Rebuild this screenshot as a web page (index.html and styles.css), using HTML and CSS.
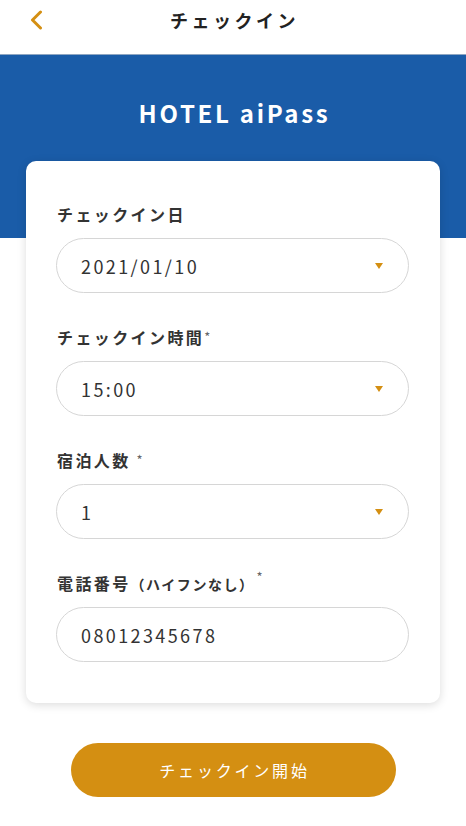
FILE: index.html
```html
<!DOCTYPE html>
<html lang="ja">
<head>
<meta charset="utf-8">
<title>チェックイン</title>
<link rel="stylesheet" href="styles.css">
</head>
<body>
<header class="topbar">
  <a class="back" aria-label="戻る">
    <svg width="14" height="20" viewBox="0 0 14 20"><path d="M11.5 2 L3.5 10 L11.5 18" fill="none" stroke="#d48f12" stroke-width="3" stroke-linecap="round" stroke-linejoin="round"/></svg>
  </a>
  <h1 class="title">チェックイン</h1>
</header>
<section class="hero">
  <div class="brand">HOTEL aiPass</div>
</section>
<main class="card">
  <div class="field">
    <label class="label">チェックイン日</label>
    <div class="control select"><span class="value">2021/01/10</span><span class="caret"></span></div>
  </div>
  <div class="field">
    <label class="label">チェックイン時間<span class="req">*</span></label>
    <div class="control select"><span class="value">15:00</span><span class="caret"></span></div>
  </div>
  <div class="field">
    <label class="label">宿泊人数<span class="req sp">*</span></label>
    <div class="control select"><span class="value">1</span><span class="caret"></span></div>
  </div>
  <div class="field">
    <label class="label">電話番号<span class="sub">（ハイフンなし）</span><span class="req hi">*</span></label>
    <div class="control"><span class="value">08012345678</span></div>
  </div>
</main>
<div class="actions">
  <button class="primary">チェックイン開始</button>
</div>
</body>
</html>
```
FILE: styles.css
```css
* { box-sizing: border-box; }
html, body { margin: 0; padding: 0; }
body {
  width: 466px;
  background: #fff;
  font-family: "Noto Sans CJK JP", "Noto Sans", sans-serif;
  color: #333;
}
.topbar {
  height: 55px;
  display: flex;
  align-items: center;
  justify-content: center;
  position: relative;
  border-bottom: 1px solid #8ea6c2;
  padding-bottom: 14px;
}
.back {
  position: absolute;
  left: 29px;
  top: 10px;
  display: flex;
}
.title {
  margin: 0;
  font-size: 18px;
  font-weight: 700;
  letter-spacing: 3.5px;
  color: #222;
  line-height: 24px;
  padding-left: 3px;
}
.hero {
  background: #1a5ca8;
  height: 183px;
  display: flex;
  justify-content: center;
  padding-top: 41px;
}
.brand {
  color: #fff;
  font-size: 24px;
  font-weight: 700;
  letter-spacing: 2.7px;
  line-height: 34px;
  height: 34px;
  padding-left: 3px;
}
.card {
  margin: -77px 26px 0;
  background: #fff;
  border-radius: 10px;
  box-shadow: 0 2px 10px rgba(0,0,0,0.14);
  padding: 41px 31px 41px 30px;
  display: flex;
  flex-direction: column;
  gap: 32px;
  position: relative;
}
.field { display: flex; flex-direction: column; gap: 12px; }
.label {
  display: block;
  height: 24px;
  font-size: 16px;
  font-weight: 700;
  letter-spacing: 2.4px;
  color: #333;
  line-height: 24px;
  padding-left: 1px;
  white-space: nowrap;
}
.req {
  font-size: 13px;
  font-weight: 400;
  color: #666;
  letter-spacing: 0;
  line-height: 0;
  vertical-align: 2px;
}
.req.sp { margin-left: 6px; }
.req.hi { vertical-align: 8px; margin-left: 2px; }
.sub { font-size: 14px; letter-spacing: 1.5px; }
.control {
  height: 55px;
  border: 1px solid #d6d6d6;
  border-radius: 28px;
  display: flex;
  align-items: center;
  justify-content: space-between;
  padding: 0 25px 0 24px;
}
.value {
  font-size: 18px;
  letter-spacing: 2.4px;
  color: #333;
}
.caret {
  width: 0;
  height: 0;
  border-left: 4.5px solid transparent;
  border-right: 4.5px solid transparent;
  border-top: 6px solid #d48f12;
  margin-top: 1px;
}
.actions {
  display: flex;
  justify-content: center;
  padding-top: 40px;
}
.primary {
  width: 325px;
  height: 54px;
  border: none;
  border-radius: 27px;
  background: #d48f12;
  color: #fff;
  font-family: "Noto Sans CJK JP", "Noto Sans", sans-serif;
  font-size: 16px;
  letter-spacing: 2.8px;
  padding: 0 0 0 3px;
}
```
